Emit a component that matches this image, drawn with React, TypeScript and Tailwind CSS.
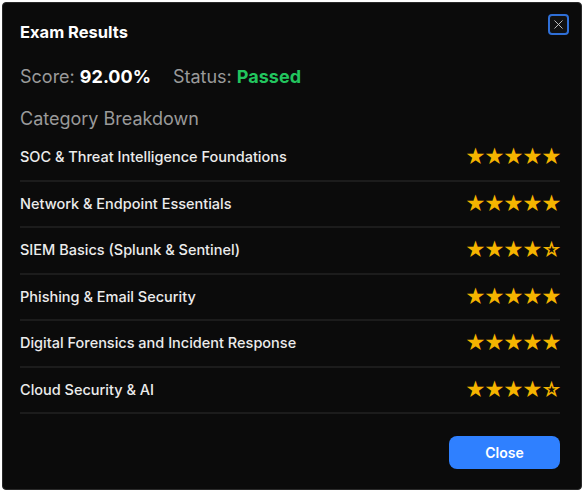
import { X } from "lucide-react";

const categories = [
  { name: "SOC & Threat Intelligence Foundations", rating: 5 },
  { name: "Network & Endpoint Essentials", rating: 5 },
  { name: "SIEM Basics (Splunk & Sentinel)", rating: 4 },
  { name: "Phishing & Email Security", rating: 5 },
  { name: "Digital Forensics and Incident Response", rating: 5 },
  { name: "Cloud Security & AI", rating: 4 },
];

const Stars = ({ rating }: { rating: number }) => {
  return (
    <div className="flex text-[20px] leading-none text-[#f5b400]">
      {[1, 2, 3, 4, 5].map((i) => (
        <span key={i} className="w-[19px] text-center">
          {i <= rating ? "★" : "☆"}
        </span>
      ))}
    </div>
  );
};

export default function App() {
  return (
    <div className="h-[492px] w-[584px] bg-white p-[2px] font-['Inter',sans-serif]">
      <div className="relative flex h-full flex-col rounded-sm border border-[#2a2a2a] bg-[#0b0b0b] pl-[17px] pr-[18px] pt-[18px] text-white">
        <button className="absolute right-[12px] top-[11px] flex h-[21px] w-[21px] items-center justify-center rounded-[4px] border-2 border-[#2f6fd6] bg-[#111]">
          <X size={15} strokeWidth={1.5} className="text-[#c4c4c4]" />
        </button>
        <h2 className="text-[16.5px] font-bold leading-[22px]">Exam Results</h2>

        <div className="mt-[22px] flex gap-[22px] text-[18px] leading-[24px]">
          <p className="text-[#9a9a9a]">
            Score: <span className="font-bold text-white">92.00%</span>
          </p>
          <p className="text-[#9a9a9a]">
            Status: <span className="font-bold text-[#22c55e]">Passed</span>
          </p>
        </div>

        <h3 className="mt-[18px] text-[18px] leading-[24px] text-[#9a9a9a]">
          Category Breakdown
        </h3>

        <div className="mt-[4px] mr-[3px]">
          {categories.map((c) => (
            <div
              key={c.name}
              className="flex h-[46.5px] items-center justify-between border-b-2 border-[#1c1c1c]"
            >
              <span className="text-[14.5px] font-medium text-[#ececec]">
                {c.name}
              </span>
              <Stars rating={c.rating} />
            </div>
          ))}
        </div>

        <div className="mt-[22px] mr-[3px] flex justify-end">
          <button className="h-[33px] w-[111px] rounded-lg bg-[#2f80ff] text-[14px] font-semibold text-white">
            Close
          </button>
        </div>
      </div>
    </div>
  );
}
